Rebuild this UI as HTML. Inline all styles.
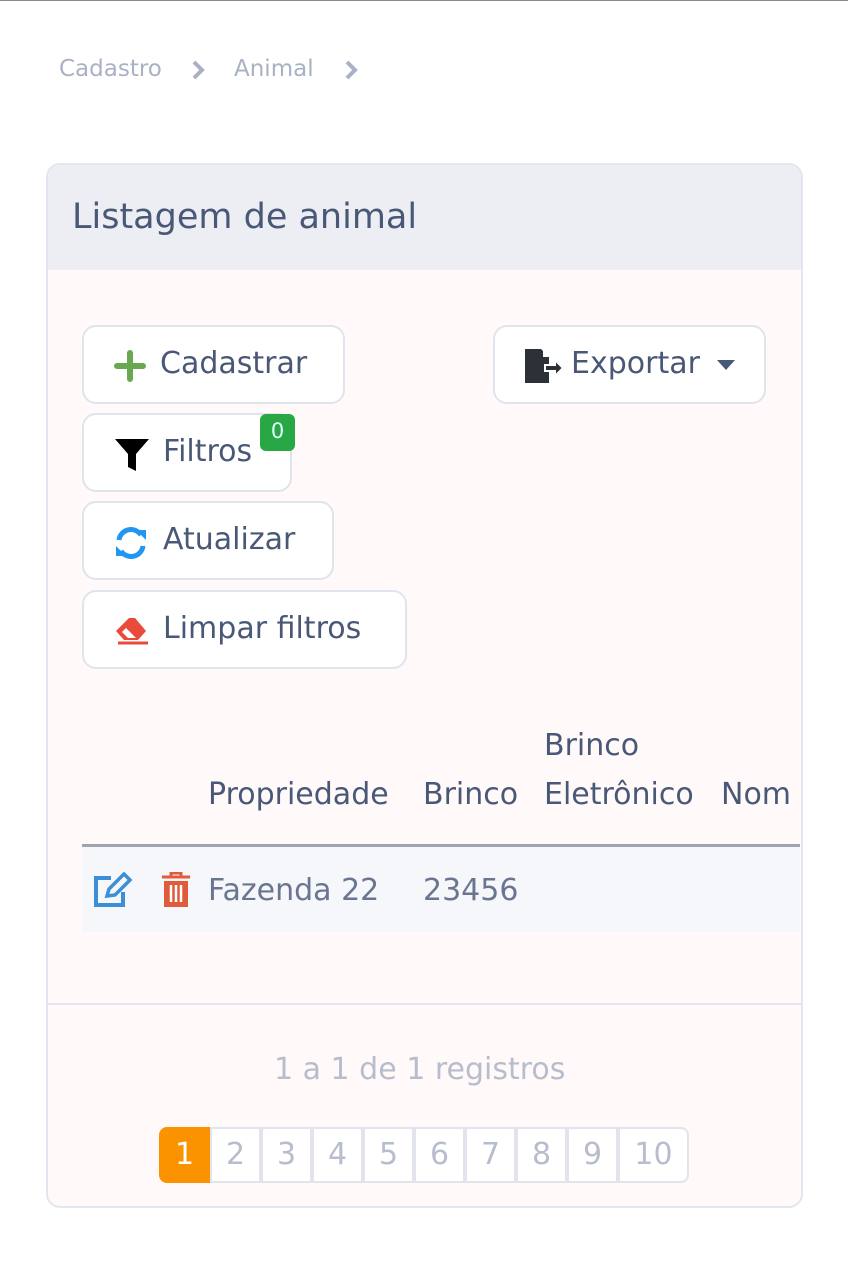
<!DOCTYPE html>
<html><head><meta charset="utf-8"><style>
*{margin:0;padding:0;box-sizing:border-box}
body{width:848px;height:1280px;background:#fff;font-family:"DejaVu Sans","Liberation Sans",sans-serif;color:#4a5878;position:relative;overflow:hidden;border-top:1px solid #888}
.a{position:absolute;white-space:nowrap}
.crumb{color:#a9b1c4;font-size:23px}
.card{position:absolute;left:46px;top:162px;width:757px;height:1045px;border:2px solid #e3e6ee;border-radius:14px;background:#fffaf9;overflow:hidden}
.hd{position:absolute;left:0;top:0;right:0;height:105px;background:#eceef4}
.btn{position:absolute;border:2px solid #e1e4ec;border-radius:14px;background:#fff;font-size:30px;color:#4a5878}
.btn span{position:absolute;top:19px}
.t{font-size:30px}
.pg{position:absolute;top:1126px;height:56px;width:51px;border:2px solid #e1e4ec;color:#b7bdcc;font-size:30px;text-align:center;line-height:52px;background:#fff}
</style></head><body>
<div class="a crumb" style="left:59px;top:55px">Cadastro</div>
<svg class="a" style="left:190px;top:58px" width="16" height="22" viewBox="0 0 16 22"><path d="M4 3l8 8-8 8" stroke="#a9b1c4" stroke-width="4" fill="none"/></svg>
<div class="a crumb" style="left:234px;top:55px">Animal</div>
<svg class="a" style="left:343px;top:58px" width="16" height="22" viewBox="0 0 16 22"><path d="M4 3l8 8-8 8" stroke="#a9b1c4" stroke-width="4" fill="none"/></svg>
<div class="card"><div class="hd"></div>
<div class="a" style="left:24px;top:32px;font-size:35px;color:#4a5878">Listagem de animal</div>
<div class="a" style="left:0;right:0;top:838px;border-top:2px solid #e3e6ee"></div>
</div>
<div class="btn" style="left:82px;top:324px;width:263px;height:79px"><svg class="a" style="left:30px;top:23px" width="32" height="32"><path d="M16 3v26M3 16h26" stroke="#6aa84f" stroke-width="6" stroke-linecap="round"/></svg><span style="left:76px">Cadastrar</span></div>
<div class="btn" style="left:493px;top:324px;width:273px;height:79px"><svg class="a" style="left:28px;top:20px" width="42" height="38"><path d="M2 2h16l8 8v26H2z" fill="#2c3138"/><path d="M20 2v8h6" fill="#fff"/><path d="M22 18h10v-5l8 8-8 8v-5H22z" fill="#2c3138" stroke="#fff" stroke-width="2"/></svg><span style="left:76px">Exportar</span><svg class="a" style="left:222px;top:33px" width="18" height="12"><path d="M0 0h18L9 10z" fill="#4a5878"/></svg></div>
<div class="btn" style="left:82px;top:412px;width:210px;height:79px"><svg class="a" style="left:30px;top:22px" width="36" height="36"><path d="M1 2h34L22 17v17l-8-4V17z" fill="#000"/></svg><span style="left:79px">Filtros</span></div>
<div class="a" style="left:260px;top:413px;width:35px;height:37px;background:#28a745;border-radius:6px;color:#dff;font-size:21px;text-align:center;line-height:34px">0</div>
<div class="btn" style="left:82px;top:500px;width:252px;height:79px"><svg class="a" style="left:30px;top:23px" width="34" height="34" viewBox="0 0 34 34"><path d="M5 14A12 12 0 0 1 27 9" stroke="#2196f3" stroke-width="5" fill="none"/><path d="M22 4h10v10z" fill="#2196f3"/><path d="M29 20A12 12 0 0 1 7 25" stroke="#2196f3" stroke-width="5" fill="none"/><path d="M12 30H2V20z" fill="#2196f3"/></svg><span style="left:79px">Atualizar</span></div>
<div class="btn" style="left:82px;top:589px;width:325px;height:79px"><svg class="a" style="left:30px;top:24px" width="36" height="30" viewBox="0 0 36 30"><path d="M15 2L2 15l8 9h14l8-9-11-13z" fill="#e84b3c"/><path d="M8 16l6 6h8l-10-10z" fill="#fff"/><path d="M4 27h30" stroke="#e84b3c" stroke-width="3"/></svg><span style="left:79px">Limpar filtros</span></div>
<div class="a t" style="left:208px;top:776px">Propriedade</div>
<div class="a t" style="left:423px;top:776px">Brinco</div>
<div class="a t" style="left:544px;top:727px">Brinco</div>
<div class="a t" style="left:544px;top:776px">Eletrônico</div>
<div class="a t" style="left:721px;top:776px">Nom</div>
<div class="a" style="left:82px;top:843px;width:718px;height:3px;background:#9fa4ae"></div>
<div class="a" style="left:82px;top:846px;width:718px;height:85px;background:#f6f7fa"></div>
<svg class="a" style="left:93px;top:871px" width="40" height="36" viewBox="0 0 40 36"><path d="M18 6H3v27h27V20" stroke="#3a8fd6" stroke-width="4" fill="none"/><path d="M14 24l2-7L31 2l6 6-15 15z" stroke="#3a8fd6" stroke-width="3.5" fill="none"/></svg>
<svg class="a" style="left:160px;top:871px" width="32" height="36" viewBox="0 0 32 36"><path d="M2 5h28M11 5V1h10v4" stroke="#e05a3c" stroke-width="3" fill="none"/><path d="M4 9h24v26H4z" fill="#e05a3c"/><path d="M11 13v17M16 13v17M21 13v17" stroke="#fff" stroke-width="2.5"/></svg>
<div class="a t" style="left:208px;top:872px;color:#6a7690">Fazenda 22</div>
<div class="a t" style="left:423px;top:872px;color:#6a7690">23456</div>
<div class="a t" style="left:274px;top:1051px;color:#b7bdcc">1 a 1 de 1 registros</div>
<div class="pg" style="left:159px;background:#fb9300;color:#fff;border-color:#fb9300;border-radius:8px 0 0 8px">1</div>
<div class="pg" style="left:210px">2</div><div class="pg" style="left:261px">3</div><div class="pg" style="left:312px">4</div><div class="pg" style="left:363px">5</div><div class="pg" style="left:414px">6</div><div class="pg" style="left:465px">7</div><div class="pg" style="left:516px">8</div><div class="pg" style="left:567px">9</div><div class="pg" style="left:618px;width:71px;border-radius:0 8px 8px 0">10</div>
</body></html>
